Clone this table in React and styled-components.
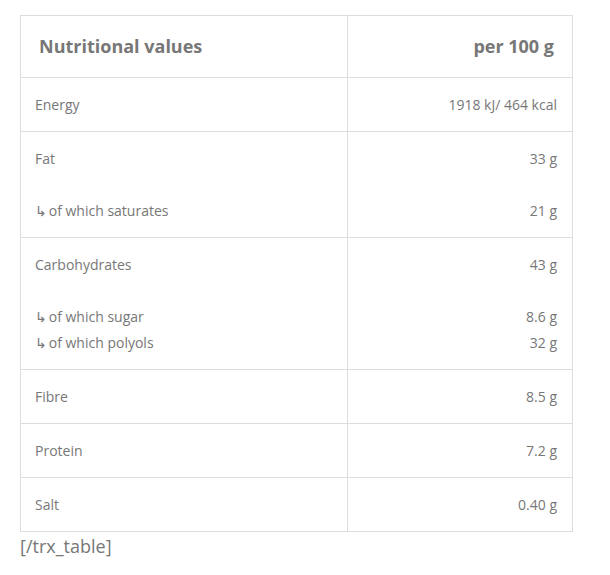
import React from 'react'
import styled, { createGlobalStyle } from 'styled-components'

const GlobalStyle = createGlobalStyle`
    body {
        margin: 0;
        background: #fff;
        font-family: 'Open Sans', 'Liberation Sans', sans-serif;
        color: #777;
    }
`

const Page = styled.div`
    padding: 15px 20px 0 20px;
`

const Table = styled.table`
    width: 553px;
    border-collapse: collapse;
    table-layout: fixed;

    td, th {
        border: 1px solid #ddd;
        vertical-align: top;
    }
`

const HeadCell = styled.th`
    box-sizing: border-box;
    padding: 17px 18px;
    font-size: 18px;
    line-height: 27px;
    font-weight: 700;
    color: #777;
    text-align: ${(p) => (p.$right ? 'right' : 'left')};
    width: ${(p) => (p.$right ? 'auto' : '327px')};
`

const Cell = styled.td`
    padding: 14px 15px 13px 14px;
    font-size: 14px;
    line-height: 26px;
    text-align: ${(p) => (p.$right ? 'right' : 'left')};
`

const Line = styled.div`
    height: 26px;
    white-space: nowrap;
`

const Arrow = styled.span`
    display: inline-block;
    line-height: 1;
    font-family: 'DejaVu Sans', sans-serif;
    font-size: 14px;
    margin-right: 2px;
`

const Shortcode = styled.div`
    font-size: 18px;
    line-height: 26px;
    color: #777;
    padding-top: 1px;
`

const rows = [
    [['Energy'], ['1918 kJ/ 464 kcal']],
    [['Fat', '', '↳of which saturates'], ['33 g', '', '21 g']],
    [
        ['Carbohydrates', '', '↳of which sugar', '↳of which polyols'],
        ['43 g', '', '8.6 g', '32 g']
    ],
    [['Fibre'], ['8.5 g']],
    [['Protein'], ['7.2 g']],
    [['Salt'], ['0.40 g']]
]

const renderLine = (text, i) => {
    if (text.startsWith('↳')) {
        return (
            <Line key={i}>
                <Arrow>↳</Arrow>
                {text.slice(1)}
            </Line>
        )
    }
    return <Line key={i}>{text}</Line>
}

const App = () => (
    <Page>
        <GlobalStyle />
        <Table>
            <thead>
                <tr>
                    <HeadCell>Nutritional values</HeadCell>
                    <HeadCell $right>per 100 g</HeadCell>
                </tr>
            </thead>
            <tbody>
                {rows.map(([names, values], i) => (
                    <tr key={i}>
                        <Cell>{names.map(renderLine)}</Cell>
                        <Cell $right>{values.map(renderLine)}</Cell>
                    </tr>
                ))}
            </tbody>
        </Table>
        <Shortcode>[/trx_table]</Shortcode>
    </Page>
)

export default App
